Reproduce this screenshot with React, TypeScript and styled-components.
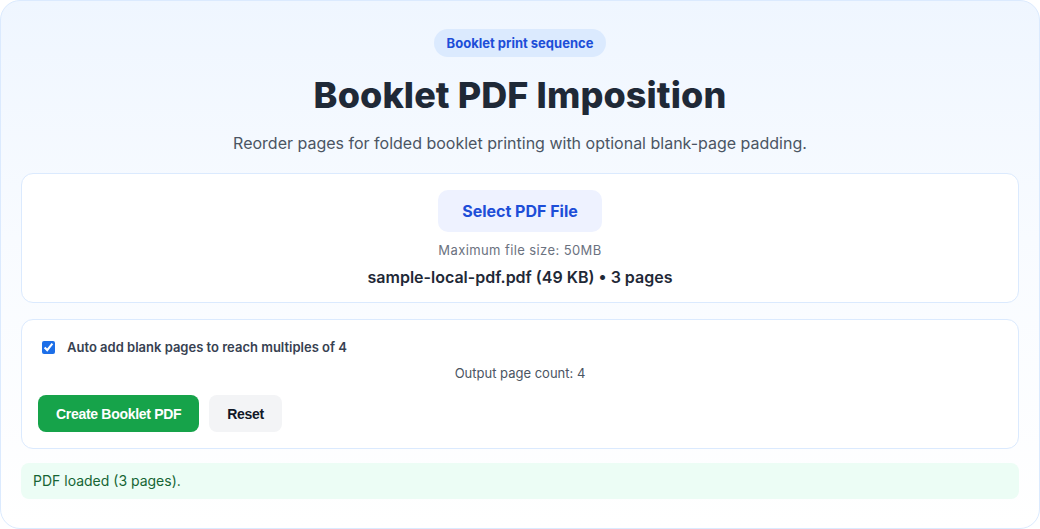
import styled, { createGlobalStyle } from "styled-components";
import { useState } from "react";

const GlobalStyle = createGlobalStyle`
  html, body {
    margin: 0;
    padding: 0;
    background: #ffffff;
  }
  body {
    font-family: Inter, "Liberation Sans", sans-serif;
    color: #1f2937;
  }
`;

const Page = styled.main`
  box-sizing: border-box;
  width: 1040px;
  height: 529px;
  padding: 28px 20px;
  border: 1px solid #dbeafe;
  border-radius: 20px;
  background: linear-gradient(180deg, #eff6ff 0%, #f8fbff 45%, #ffffff 100%);
  display: flex;
  flex-direction: column;
`;

const Header = styled.header`
  display: flex;
  flex-direction: column;
  align-items: center;
  text-align: center;
`;

const Badge = styled.span`
  display: inline-flex;
  align-items: center;
  height: 28px;
  padding: 0 13px;
  border-radius: 999px;
  background: #dbeafe;
  color: #1d4ed8;
  font-size: 13px;
  font-weight: 700;
`;

const Title = styled.h1`
  margin: 14px 0 0;
  font-size: 36px;
  line-height: 48px;
  font-weight: 800;
  letter-spacing: 0.1px;
  color: #1f2937;
`;

const Subtitle = styled.p`
  margin: 12px 0 0;
  font-size: 16px;
  line-height: 24px;
  color: #4b5563;
`;

const Card = styled.section<{ $center?: boolean }>`
  box-sizing: border-box;
  margin-top: ${(p) => (p.$center ? "18px" : "16px")};
  padding: ${(p) => (p.$center ? "16px 16px 14px" : "16px")};
  border: 1px solid #dbeafe;
  border-radius: 12px;
  background: #ffffff;
  display: flex;
  flex-direction: column;
  align-items: ${(p) => (p.$center ? "center" : "stretch")};
`;

const FileButton = styled.label`
  box-sizing: border-box;
  display: inline-flex;
  align-items: center;
  justify-content: center;
  height: 42px;
  padding: 0 24px;
  border-radius: 10px;
  background: #eef2ff;
  color: #1d4ed8;
  font-size: 16px;
  font-weight: 700;
  cursor: pointer;

  input {
    display: none;
  }
`;

const Hint = styled.p`
  margin: 9px 0 0;
  font-size: 13px;
  line-height: 18px;
  letter-spacing: 0.4px;
  color: #6b7280;
`;

const FileInfo = styled.p`
  margin: 7px 0 0;
  font-size: 16px;
  line-height: 22px;
  font-weight: 600;
  color: #1f2937;
`;

const CheckRow = styled.label`
  display: flex;
  align-items: center;
  gap: 12px;
  height: 22px;
  font-size: 13px;
  font-weight: 600;
  color: #374151;

  input {
    margin: 0 0 0 4px;
    width: 13px;
    height: 13px;
    accent-color: #1d6fe8;
  }
`;

const Count = styled.p`
  margin: 6px 0 0;
  text-align: center;
  font-size: 13px;
  line-height: 18px;
  color: #4b5563;
`;

const Actions = styled.div`
  display: flex;
  gap: 10px;
  margin-top: 13px;
`;

const Button = styled.button<{ $primary?: boolean }>`
  height: 37px;
  padding: 0 18px;
  border: none;
  border-radius: 8px;
  font-family: "Liberation Sans", Arial, sans-serif;
  font-size: 14px;
  font-weight: 700;
  letter-spacing: -0.3px;
  background: ${(p) => (p.$primary ? "#16a34a" : "#f3f4f6")};
  color: ${(p) => (p.$primary ? "#ffffff" : "#111827")};
  cursor: pointer;
`;

const Status = styled.div`
  margin-top: 14px;
  padding: 8px 12px;
  border-radius: 8px;
  background: #ecfdf5;
  color: #166534;
  font-size: 14px;
  line-height: 20px;
`;

const App = () => {
  const [autoPad, setAutoPad] = useState<boolean>(true);

  return (
    <>
      <GlobalStyle />
      <Page>
        <Header>
          <Badge>Booklet print sequence</Badge>
          <Title>Booklet PDF Imposition</Title>
          <Subtitle>
            Reorder pages for folded booklet printing with optional blank-page padding.
          </Subtitle>
        </Header>

        <Card $center>
          <FileButton>
            Select PDF File
            <input type="file" accept="application/pdf" />
          </FileButton>
          <Hint>Maximum file size: 50MB</Hint>
          <FileInfo>sample-local-pdf.pdf (49 KB) • 3 pages</FileInfo>
        </Card>

        <Card>
          <CheckRow>
            <input
              type="checkbox"
              checked={autoPad}
              onChange={(e) => setAutoPad(e.target.checked)}
            />
            Auto add blank pages to reach multiples of 4
          </CheckRow>
          <Count>Output page count: {autoPad ? 4 : 3}</Count>
          <Actions>
            <Button $primary>Create Booklet PDF</Button>
            <Button>Reset</Button>
          </Actions>
        </Card>

        <Status>PDF loaded (3 pages).</Status>
      </Page>
    </>
  );
};

export default App;
